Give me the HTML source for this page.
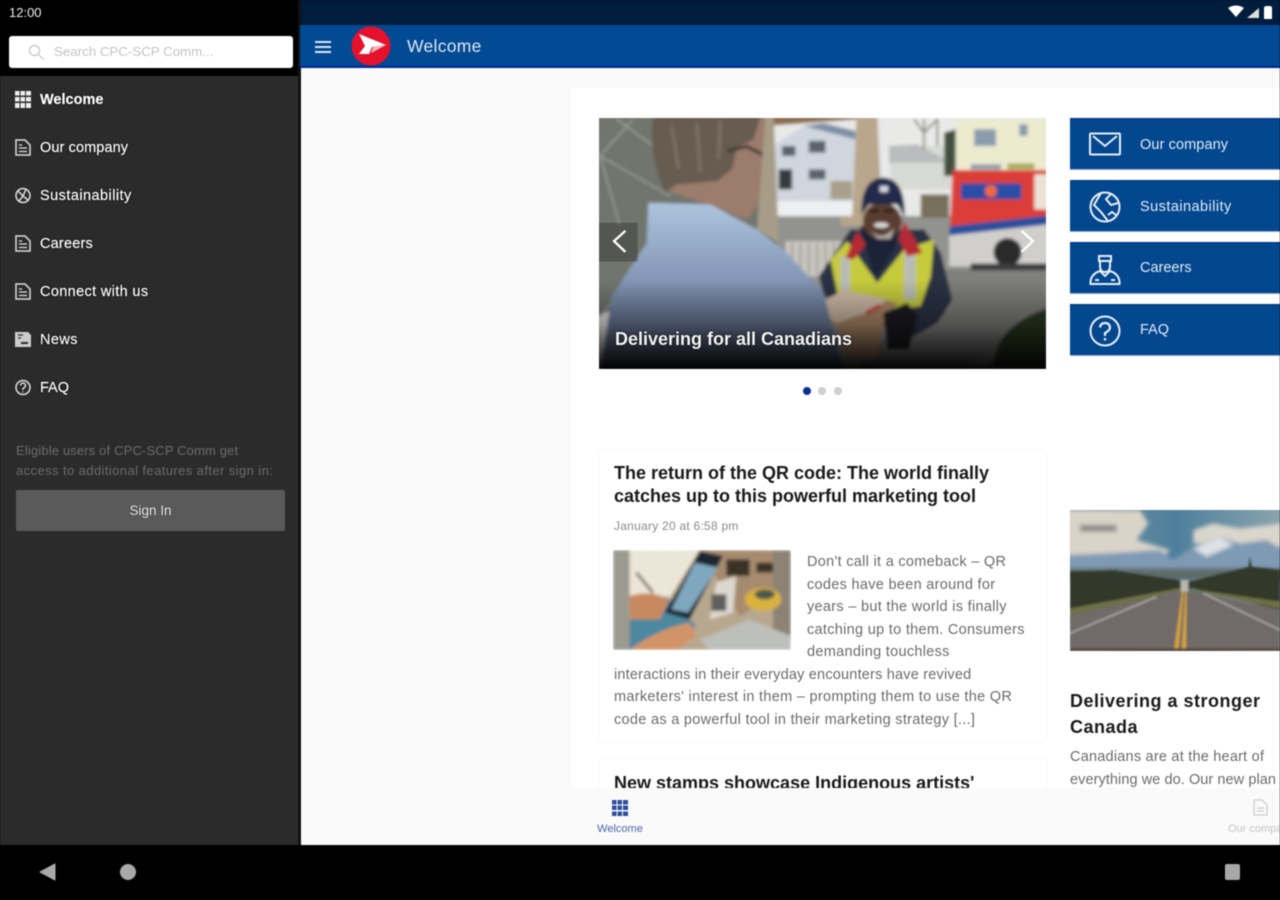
<!DOCTYPE html>
<html lang="en"><head><meta charset="utf-8"><title>Welcome</title>
<style>
*{box-sizing:border-box}
html,body{margin:0;padding:0;width:1280px;height:900px;overflow:hidden;background:#000}
body{font-family:"Liberation Sans",Arial,sans-serif}
#r{position:relative;width:1280px;height:900px;overflow:hidden;filter:blur(.55px);background:#fafafa}
.a{position:absolute}
.t{position:absolute;white-space:nowrap;line-height:20px;height:20px}
.m{color:#fff;font-size:14.5px;left:40px;font-weight:400;text-shadow:0 0 2px #000,0 0 1px #000;-webkit-text-stroke:.2px #fff}
.ic{position:absolute;left:15px}
.tile{position:absolute;left:1070px;width:210px;height:52px;background:#03478f;border-top:1px solid #02347f;border-bottom:1px solid #8fa9c9}
.tile span{position:absolute;left:70px;top:15px;color:#e3ebf4;font-size:14.5px;line-height:20px;white-space:nowrap}
.tile svg{position:absolute;left:19px;top:10px}
.card{position:absolute;left:600px;width:446px;background:#fff;box-shadow:0 0 3px rgba(0,0,0,.06)}
.h{position:absolute;white-space:nowrap;font-weight:700;font-size:18px;line-height:24px;color:#1a1a1a}
.b{position:absolute;white-space:nowrap;font-size:14.5px;letter-spacing:.3px;line-height:20px;color:#6b6b6b}
</style></head><body>
<div id="r">
<!-- status bars -->
<div class="a" style="left:0;top:0;width:300px;height:76px;background:#000"></div>
<div class="a" style="left:300px;top:0;width:980px;height:25px;background:#001d3d"></div>
<div class="t" style="left:9px;top:3px;color:#eee;font-size:13px">12:00</div>
<svg class="a" style="left:1226px;top:4px" width="50" height="18" viewBox="0 0 50 18"><path d="M2 4Q10-1 18 4L10 13Z" fill="#fff"/><path d="M33 4V14H21Z" fill="#ddd"/><path d="M38 4Q38 2 41 2h3q2 0 2 2V15H38Z" fill="#fff"/></svg>
<!-- search -->
<div class="a" style="left:9px;top:36px;width:284px;height:32px;background:#fff;border-radius:3px"></div>
<svg class="a" style="left:27px;top:43px" width="18" height="18" viewBox="0 0 18 18" fill="none" stroke="#c4c4c4" stroke-width="1.2"><circle cx="7.5" cy="7.5" r="5"/><path d="M11 11l5.500 5.500"/></svg>
<div class="t" style="left:54px;top:42px;color:#c4c4c4;font-size:13.300px">Search CPC-SCP Comm...</div>
<!-- sidebar -->
<div class="a" style="left:0;top:76px;width:298px;height:769px;background:#2b2b2b"></div>
<div class="a" style="left:298px;top:0;width:3px;height:845px;background:#111"></div>
<svg class="ic" style="top:91px" width="16" height="17" viewBox="0 0 16 17" fill="#eee"><path d="M0 0h4.500v4.500H0zM5.500 0H10v4.500H5.500zM11 0h5v4.500h-5zM0 6h4.500v4.500H0zM5.500 6H10v4.500H5.500zM11 6h5v4.500h-5zM0 12h4.500v5H0zM5.500 12H10v5H5.500zM11 12h5v5h-5z"/></svg>
<div class="t m" style="top:90px;font-weight:700;font-size:14.500px">Welcome</div>
<svg class="ic" style="top:139px" width="16" height="17" viewBox="0 0 16 17" fill="none" stroke="#ddd" stroke-width="1.500"><path d="M1 1h9l5 5v10H1z"/><path d="M4 9h8M4 12.500h8M4 6h3" stroke-width="1.200"/></svg>
<div class="t m" style="top:138px;letter-spacing:.1px">Our company</div>
<svg class="ic" style="top:187px" width="16" height="17" viewBox="0 0 16 17" fill="none" stroke="#ddd" stroke-width="1.500"><circle cx="8" cy="8.500" r="7"/><path d="M3 4l5 5-4 5M11 2L8 9l5 4"/></svg>
<div class="t m" style="top:186px;letter-spacing:.45px">Sustainability</div>
<svg class="ic" style="top:235px" width="16" height="17" viewBox="0 0 16 17" fill="none" stroke="#ddd" stroke-width="1.500"><path d="M1 1h9l5 5v10H1z"/><path d="M4 9h8M4 12.500h8M4 6h3" stroke-width="1.200"/></svg>
<div class="t m" style="top:234px;letter-spacing:.2px">Careers</div>
<svg class="ic" style="top:283px" width="16" height="17" viewBox="0 0 16 17" fill="none" stroke="#ddd" stroke-width="1.500"><path d="M1 1h9l5 5v10H1z"/><path d="M4 9h8M4 12.500h8M4 6h3" stroke-width="1.200"/></svg>
<div class="t m" style="top:282px;letter-spacing:.35px">Connect with us</div>
<svg class="ic" style="top:331px" width="16" height="17" viewBox="0 0 16 17" fill="#ccc"><path d="M0 1h13l3 3v12H0z"/><path d="M3 4h5M3 7h3" stroke="#2b2b2b" stroke-width="1.200"/><path d="M6 12h7" stroke="#2b2b2b" stroke-width="2"/></svg>
<div class="t m" style="top:330px;letter-spacing:.4px">News</div>
<svg class="ic" style="top:379px" width="16" height="17" viewBox="0 0 16 17" fill="none" stroke="#ddd" stroke-width="1.500"><circle cx="8" cy="8.500" r="7"/><path d="M5.500 6.500Q6 4 8 4t2.500 2.500Q10.500 8 8 9.500V11M8 12.500v1"/></svg>
<div class="t m" style="top:378px">FAQ</div>
<div class="t" style="left:16px;top:441px;color:#6c6c6c;font-size:13px;letter-spacing:.15px">Eligible users of CPC-SCP Comm get</div>
<div class="t" style="left:16px;top:461px;color:#6c6c6c;font-size:13px;letter-spacing:.41px">access to additional features after sign in:</div>
<div class="a" style="left:16px;top:490px;width:269px;height:41px;background:#5a5a5a;border-radius:2px"></div>
<div class="t" style="left:16px;width:269px;top:501px;text-align:center;color:#f2f2f2;font-size:13.500px;text-shadow:0 0 1px #000">Sign In</div>
<!-- app bar -->
<div class="a" style="left:300px;top:25px;width:980px;height:43px;background:#024a94;border-bottom:2px solid #02259a"></div>
<svg class="a" style="left:314px;top:40px" width="18" height="14" viewBox="0 0 18 14" fill="#dce6f3"><path d="M1 1h16v2H1zM1 6h16v2H1zM1 11h16v2H1z"/></svg>
<svg class="a" style="left:351px;top:26px" width="40" height="40" viewBox="0 0 40 40"><circle cx="20" cy="20" r="19.500" fill="#e5112d"/><path d="M8 8l27 11-14 2-3 7-10 0 6-8z" fill="#fff"/><path d="M22 21l13-2-15 8z" fill="#f3b4bb"/></svg>
<div class="t" style="left:407px;top:36px;color:#dfe7f3;font-size:17.500px;letter-spacing:.3px">Welcome</div>
<!-- panel -->
<div class="a" style="left:571px;top:88px;width:709px;height:700px;background:#fff"></div>
<!-- hero photo -->
<svg class="a" style="left:599px;top:118px" width="447" height="251" viewBox="27 27 1338 750">
<defs>
<linearGradient id="sh" x1="0" y1="0" x2="0" y2="1"><stop offset="0" stop-color="#aec4de"/><stop offset=".45" stop-color="#8497b6"/><stop offset="1" stop-color="#4f5b78"/></linearGradient>
<linearGradient id="ov" x1="0" y1="0" x2="0" y2="1"><stop offset="0" stop-color="#000" stop-opacity="0"/><stop offset=".5" stop-color="#000" stop-opacity=".35"/><stop offset="1" stop-color="#000" stop-opacity=".97"/></linearGradient>
<filter id="f"><feGaussianBlur stdDeviation="4.500"/></filter>
</defs>
<g filter="url(#f)">
<rect x="20" y="20" width="1360" height="770" fill="#e9e9e8"/>
<rect x="530" y="320" width="850" height="470" fill="#92928f"/>
<path d="M1040 480H1370V620L1100 790H800Z" fill="#7f7f7c"/>
<path d="M20 20H540L565 400 20 620Z" fill="#6f766d"/>
<path d="M30 140L130 30M30 140L240 260M80 30L190 110M30 140L90 350M30 620L130 500" stroke="#9ea5a0" stroke-width="4" fill="none"/>
<path d="M530 20H800V30L530 50Z" fill="#8b6c50"/>
<path d="M555 105L640 50 795 90V285H555Z" fill="#d0d6dd"/>
<path d="M640 50L795 90V65L700 42Z" fill="#7e8ea6"/>
<path d="M575 110h40v30h-40zM655 95h50v35h-50zM655 180h50v30h-50z" fill="#59636e"/>
<path d="M565 180h40v60h-40z" fill="#333a40"/>
<rect x="555" y="275" width="240" height="45" fill="#eef0f3"/>
<path d="M895 110H1080V240H895Z" fill="#d7dad4"/>
<path d="M895 110L980 105 1080 160H895Z" fill="#b9bdbd"/>
<path d="M1000 30V120M1000 70L970 30M1000 70L1040 30M1040 30V110" stroke="#8a8378" stroke-width="6" fill="none"/>
<path d="M1060 70L1095 60V200H1060Z" fill="#42503f"/>
<rect x="990" y="255" width="85" height="70" fill="#77705a"/>
<rect x="720" y="215" width="65" height="55" fill="#a8a08a"/>
<path d="M1095 30H1370V185H1095Z" fill="#eceacf"/>
<path d="M1150 60h65v50h-65zM1285 45h25v35h-25zM1140 165h90v15h-90z" fill="#8a9cac"/>
<path d="M1250 162h80v18h-80z" fill="#a9ab5c"/>
<path d="M798 20H880L892 320H785Z" fill="#b9a68c"/>
<path d="M860 20H885L900 200 890 320H875Z" fill="#e7e8e9"/>
<rect x="750" y="320" width="130" height="30" fill="#b7a58a"/>
<path d="M1085 182H1370V325L1078 350Z" fill="#dc3d38"/>
<path d="M1078 350L1370 318V345L1075 378Z" fill="#2c4f9d"/>
<path d="M1075 378L1370 345V470H1075Z" fill="#d0cfcb"/>
<rect x="1110" y="222" width="182" height="48" fill="#2a4ea6"/>
<circle cx="1200" cy="245" r="18" fill="#f0683e"/>
<path d="M1330 195h40v105h-40z" fill="#ece2d4"/>
<circle cx="1250" cy="428" r="42" fill="#2a2a2a"/>
<path d="M1140 462H1370V482H1140Z" fill="#3a3a3a"/>
<path d="M585 395H760V500H585Z" fill="#c9c6bf"/>
<path d="M605 400v95M630 400v95M655 400v95M680 400v95M705 400v95M730 400v95" stroke="#9a9791" stroke-width="5"/>
<path d="M1205 775Q1210 650 1370 595V775Z" fill="#2c3a24"/>
<!-- postman -->
<path d="M685 500L780 360H1000L1050 430 1085 570 1040 640 970 680 900 660 700 560Z" fill="#2b3144"/>
<path d="M720 450L770 395 860 520 940 420 1030 390 1020 500 990 590 910 600 770 590 740 550Z" fill="#c6cb3e"/>
<path d="M750 440h28v110h-28zM940 430h35v140h-35z" fill="#b9bcb5"/>
<path d="M808 350L855 510 915 410 920 350Z" fill="#1c2238"/>
<path d="M765 445L800 365 825 405 790 450ZM925 390L940 335 995 430 950 440Z" fill="#b52b30"/>
<ellipse cx="875" cy="335" rx="58" ry="55" fill="#5a3e30"/>
<path d="M835 360Q875 400 910 355L900 388 862 388Z" fill="#b0aca5"/>
<ellipse cx="872" cy="347" rx="22" ry="8" fill="#dcdcdc"/>
<path d="M835 300h30v8h-30zM880 300h30v8h-30z" fill="#1c1714"/>
<path d="M812 315Q812 205 880 205 945 210 942 325L920 285H835Z" fill="#222c4c"/>
<rect x="868" y="230" width="24" height="18" fill="#d9dde8"/>
<!-- box -->
<path d="M705 570L760 542 920 580 880 640 860 745H770L745 660 705 620Z" fill="#ad8967"/>
<path d="M705 570L760 542 890 570 850 600 740 640 705 620Z" fill="#d0bba8"/>
<path d="M825 605l42-22 5 10-42 22z" fill="#c52d2d"/>
<path d="M878 610L950 580 980 620 955 720H890Z" fill="#1d1e22"/>
<!-- man -->
<path d="M220 240Q170 120 190 20H525L535 160 500 290 470 330 350 285Z" fill="#9c7c6c"/>
<path d="M190 20H510L490 90 440 115 425 180 380 215 260 225 225 250Q170 130 190 20Z" fill="#665c50"/>
<path d="M245 50L265 180M320 40L330 190M390 35L385 150" stroke="#7d7264" stroke-width="10" fill="none"/>
<path d="M410 125L470 112 545 150" stroke="#35352f" stroke-width="9" fill="none"/>
<path d="M525 20L550 20 565 400 500 360Z" fill="#a79c87"/>
<path d="M175 280L360 285 500 360 590 430 700 550 760 790H30L65 560 170 400Z" fill="url(#sh)"/>
</g>
<rect x="27" y="510" width="1340" height="267" fill="url(#ov)"/>
<rect x="27" y="340" width="116" height="116" fill="rgba(30,30,30,.35)"/>
<path d="M106 364L72 395 106 427" stroke="#fff" stroke-width="7" fill="none"/>
<path d="M1292 364L1326 395 1292 427" stroke="#fff" stroke-width="7" fill="none"/>
</svg>
<div class="t" style="left:615px;top:329px;color:#f5f5f5;font-size:18px;font-weight:700;text-shadow:0 0 2px #000">Delivering for all Canadians</div>
<div class="a" style="left:803px;top:387px;width:8px;height:8px;border-radius:50%;background:#0a2f9c"></div>
<div class="a" style="left:818px;top:387px;width:8px;height:8px;border-radius:50%;background:#cfcfcf"></div>
<div class="a" style="left:834px;top:387px;width:8px;height:8px;border-radius:50%;background:#cfcfcf"></div>
<!-- tiles -->
<div class="tile" style="top:118px"><svg width="32" height="32" viewBox="0 0 32 32" fill="none" stroke="#e6edf5" stroke-width="2"><rect x="1" y="4.500" width="30" height="21" rx="1"/><path d="M4 7l12 10L28 7"/></svg><span style="top:16px;letter-spacing:.1px">Our company</span></div>
<div class="tile" style="top:180px"><svg width="32" height="32" viewBox="0 0 32 32" fill="none" stroke="#e6edf5" stroke-width="2"><circle cx="16" cy="16" r="14.500"/><path d="M12 2L5 14l7 7 7 9M22 3l-5 5 5 6 7-2M27 24l-4-3-4 3"/></svg><span style="top:16px;letter-spacing:.45px">Sustainability</span></div>
<div class="tile" style="top:242px"><svg width="32" height="32" viewBox="0 0 32 32" fill="none" stroke="#e6edf5" stroke-width="2"><path d="M10 3h12v5H10zM11 8v5q0 6 5 6t5-6V8"/><path d="M11 18Q2 21 1.500 29v2h29v-2Q30 21 21 18l-5 5z"/><path d="M6 27h4M22 27h4"/></svg><span>Careers</span></div>
<div class="tile" style="top:304px"><svg width="32" height="32" viewBox="0 0 32 32" fill="none" stroke="#e6edf5" stroke-width="2"><circle cx="16" cy="16" r="14.500"/><path d="M11 12.500Q11.500 8 16 8t5 4.500q0 3-5 5.500v3M16 23v2.500" stroke-width="2.200"/></svg><span>FAQ</span></div>
<!-- article 1 -->
<div class="card" style="top:451px;height:290px"></div>
<div class="h" style="left:614px;top:461px">The return of the QR code: The world finally</div>
<div class="h" style="left:614px;top:484px">catches up to this powerful marketing tool</div>
<div class="b" style="left:614px;top:516px;font-size:12px;color:#8a8a8a;letter-spacing:.25px">January 20 at 6:58 pm</div>
<svg class="a" style="left:613px;top:550px" width="178" height="100" viewBox="40 302 534 300">
<defs><filter id="g"><feGaussianBlur stdDeviation="5"/></filter></defs>
<g filter="url(#g)">
<rect x="40" y="302" width="534" height="300" fill="#b7a78e"/>
<rect x="40" y="302" width="50" height="300" fill="#9b9a8e"/>
<path d="M90 302H300L200 460 90 510Z" fill="#ece6d8"/>
<path d="M520 302H574V600H520Z" fill="#8d8375"/>
<path d="M300 302H520V440L420 500Z" fill="#a68b6e"/>
<path d="M90 510L200 440 290 530 200 602H90Z" fill="#4e87a0"/>
<path d="M90 440Q150 420 210 450L180 510H90Z" fill="#c9895f"/>
<path d="M90 602Q170 540 270 520L290 560 230 602Z" fill="#d29466"/>
<path d="M300 305L370 320 270 510 195 490Z" fill="#1d2830"/>
<path d="M285 340L355 355 265 490 215 480Z" fill="#7fa7be"/>
<path d="M350 400L410 380 400 490 330 510Z" fill="#ddd8cf"/>
<rect x="335" y="435" width="45" height="50" fill="#5d5f5c"/>
<ellipse cx="490" cy="450" rx="55" ry="35" fill="#d9b13e"/>
<ellipse cx="495" cy="435" rx="30" ry="15" fill="#4b5a4d"/>
<path d="M300 570L450 510 574 560V602H330Z" fill="#bdbfba"/>
<path d="M380 330h70v50h-70zM470 340h50v30h-50z" fill="#3a3028"/>
<path d="M110 370L160 430" stroke="#6b5a48" stroke-width="8"/>
</g>
</svg>
<div class="b" style="left:807px;top:552px">Don't call it a comeback – QR</div>
<div class="b" style="left:807px;top:575px">codes have been around for</div>
<div class="b" style="left:807px;top:597px">years – but the world is finally</div>
<div class="b" style="left:807px;top:620px">catching up to them. Consumers</div>
<div class="b" style="left:807px;top:642px">demanding touchless</div>
<div class="b" style="left:614px;top:665px;letter-spacing:.2px">interactions in their everyday encounters have revived</div>
<div class="b" style="left:614px;top:687px">marketers' interest in them – prompting them to use the QR</div>
<div class="b" style="left:614px;top:710px">code as a powerful tool in their marketing strategy [...]</div>
<!-- article 2 -->
<div class="card" style="top:759px;height:60px"></div>
<div class="h" style="left:614px;top:771px">New stamps showcase Indigenous artists'</div>
<!-- right column -->
<svg class="a" style="left:1070px;top:510px" width="210" height="141" viewBox="30 30 630 423">
<defs><linearGradient id="sky" x1="0" y1="0" x2="1" y2="0"><stop offset="0" stop-color="#7d98a3"/><stop offset=".5" stop-color="#4d7f9c"/><stop offset="1" stop-color="#8aa4ae"/></linearGradient><filter id="k"><feGaussianBlur stdDeviation="6"/></filter><filter id="k2"><feGaussianBlur stdDeviation="3"/></filter></defs>
<rect x="30" y="30" width="630" height="423" fill="url(#sky)"/>
<g filter="url(#k)">
<path d="M20 30H240L265 70 230 120 330 150 300 180H20Z" fill="#d9d3c8"/>
<path d="M60 75h110v20H60z" fill="#8f8a88"/>
<path d="M400 90l60-20 80 15 130-15v70l-270-10z" fill="#d9d6cc"/>
<path d="M20 165L150 160 300 150 340 180 400 140 480 112 540 130 620 120 670 150V230H20Z" fill="#7f9ab5"/>
<path d="M400 145L480 112 520 135 440 170Z" fill="#dde2e5"/>
<path d="M20 205H670V240H20Z" fill="#5d6a68"/>
</g>
<g filter="url(#k2)">
<path d="M30 215L160 212 355 240 362 245 390 245 570 200 660 210V330L400 265H360L30 345Z" fill="#33392a"/>
<path d="M150 205l8 30 8-30 8 30 8-25 8 25H140ZM570 170l8 50h-16Z" fill="#2d3a30"/>
<path d="M30 325L355 265H385L660 305V325L385 270 30 350Z" fill="#6f7044"/>
<path d="M30 345L362 272H382L660 328V453H30Z" fill="#6f6a68"/>
<path d="M30 400L290 290M430 280L660 390" stroke="#c9c8c2" stroke-width="3" fill="none"/>
<path d="M366 275L342 453H355L371 275ZM376 275L365 453H378L380 275Z" fill="#d9a536"/>
<path d="M30 445H660V453H30Z" fill="#5a3a30"/>
<path d="M362 240H385V275H362Z" fill="#b7b6ad"/>
</g>
</svg>
<div class="h" style="left:1070px;top:689px;font-size:18px;letter-spacing:.5px;line-height:25px">Delivering a stronger</div>
<div class="h" style="left:1070px;top:715px;font-size:18px;letter-spacing:.5px;line-height:25px">Canada</div>
<div class="b" style="left:1070px;top:747px;letter-spacing:.22px">Canadians are at the heart of</div>
<div class="b" style="left:1070px;top:770px;letter-spacing:.07px">everything we do. Our new plan</div>
<!-- bottom nav -->
<div class="a" style="left:301px;top:788px;width:979px;height:57px;background:#fafafa"></div>
<svg class="a" style="left:612px;top:800px" width="16" height="16" viewBox="0 0 16 16" fill="#2f4f9e"><path d="M0 0h4.500v4.500H0zM5.500 0H10v4.500H5.500zM11 0h5v4.500h-5zM0 5.500h4.500V10H0zM5.500 5.500H10V10H5.500zM11 5.500h5V10h-5zM0 11.500h4.500V16H0zM5.500 11.500H10V16H5.500zM11 11.500h5V16h-5z"/></svg>
<div class="t" style="left:580px;width:80px;top:819px;text-align:center;color:#4a6aa6;font-size:11px">Welcome</div>
<svg class="a" style="left:1253px;top:799px" width="15" height="17" viewBox="0 0 15 17" fill="none" stroke="#cfcfcf" stroke-width="1.300"><path d="M1 1h8l5 5v10H1z"/><path d="M4 9h7M4 12h7"/></svg>
<div class="t" style="left:1228px;top:819px;color:#c4c4c4;font-size:11px">Our company</div>
<!-- nav bar -->
<div class="a" style="left:0;top:845px;width:1280px;height:55px;background:#000"></div>
<svg class="a" style="left:38px;top:862px" width="20" height="20" viewBox="0 0 20 20"><path d="M2 10L17 2V18Z" fill="#a8a8a8" stroke="#a8a8a8" stroke-linejoin="round"/></svg>
<div class="a" style="left:120px;top:864px;width:16px;height:16px;border-radius:50%;background:#a8a8a8"></div>
<div class="a" style="left:1225px;top:864px;width:15px;height:16px;border-radius:2px;background:#a8a8a8"></div>
</div>
</body></html>
